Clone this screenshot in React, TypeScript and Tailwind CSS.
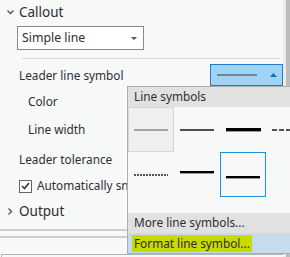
export default function App() {
  const font = { fontFamily: '"Noto Sans", "Segoe UI", sans-serif' }

  return (
    <div
      className="relative flex h-[257px] w-[290px] overflow-hidden bg-[#f7f8f8] text-[11.8px] text-[#2e2e36]"
      style={font}
    >
      {/* panel */}
      <div className="flex flex-1 flex-col">
        <div className="flex h-[24px] shrink-0 items-center pt-[1px]">
          <svg className="ml-[7px] mr-[5px]" width="7" height="5" viewBox="0 0 7 5">
            <path d="M0.5 0.5 L3.5 3.5 L6.5 0.5" fill="none" stroke="#555" strokeWidth="1.4" />
          </svg>
          <span className="text-[13.5px]">Callout</span>
        </div>
        <div className="ml-[17px] mt-[2px] flex h-[24px] w-[127px] shrink-0 items-center justify-between border border-[#8a8a8a] bg-white pl-[4px] pr-[6px]">
          <span className="text-[12.3px]">Simple line</span>
          <svg width="6" height="3" viewBox="0 0 6 3">
            <path d="M0 0 H6 L3 3 Z" fill="#555" />
          </svg>
        </div>
        <div className="ml-[22px] mr-[3px] mt-[8px] h-px shrink-0 bg-[#d9dada]" />

        <div className="mt-[5px] flex h-[22px] shrink-0 items-center justify-between pl-[19px]">
          <span className="pt-[2px]">Leader line symbol</span>
          <div className="flex h-[22px] w-[73px] items-center border border-[#1c7fcb] bg-[#a0d4f5] pl-[6px] pr-[5px]">
            <div className="h-[2px] w-[40px] bg-[#6a8799]" />
            <svg className="ml-auto" width="7" height="4" viewBox="0 0 7 4">
              <path d="M0 4 H7 L3.5 0 Z" fill="#1a6db0" />
            </svg>
          </div>
        </div>

        <div className="mt-[6px] flex h-[20px] shrink-0 items-center pl-[28px]">Color</div>
        <div className="mt-[8px] flex h-[20px] shrink-0 items-center pl-[28px]">Line width</div>
        <div className="mt-[10px] flex h-[20px] shrink-0 items-center pl-[19px]">Leader tolerance</div>
        <div className="mt-[6px] flex h-[20px] shrink-0 items-center pl-[19px]">
          <div className="flex h-[13px] w-[13px] items-center justify-center border border-[#666] bg-white">
            <svg width="9" height="8" viewBox="0 0 9 8">
              <path d="M1 4 L3.5 6.5 L8 1" fill="none" stroke="#333" strokeWidth="1.6" />
            </svg>
          </div>
          <span className="ml-[5px] whitespace-nowrap">Automatically snap</span>
        </div>
        <div className="mt-[4px] flex h-[22px] shrink-0 items-center">
          <svg className="ml-[8px] mr-[6px]" width="5" height="7" viewBox="0 0 5 7">
            <path d="M0.5 0.5 L3.5 3.5 L0.5 6.5" fill="none" stroke="#555" strokeWidth="1.4" />
          </svg>
          <span className="text-[13.5px]">Output</span>
        </div>
        <div className="mt-[7px] h-[2px] w-[127px] shrink-0 bg-[#cfcfcf]" />
        <div className="mt-[5px] h-[2px] w-[127px] shrink-0 bg-[#cfcfcf]" />
        <div className="ml-[1px] mt-[16px] flex-1 border-l border-t border-[#b5b5b5] bg-[#f7f8f8]" />
      </div>

      {/* scrollbar */}
      <div className="flex w-[7px]">
        <div className="w-[3px] bg-[#ebebeb]" />
        <div className="w-[4px] bg-[#bcbcbc]" />
      </div>

      {/* line symbol gallery popup */}
      <div className="absolute left-[127px] top-[86px] flex w-[175px] flex-col border border-[#adadad] bg-[#f7f8f8]">
        <div className="flex h-[20px] items-center bg-[#e1e1e1] pl-[6px]">Line symbols</div>
        <div className="grid grid-cols-[46px_46px_46px_46px]">
          <div className="flex h-[45px] items-center justify-center border border-[#d6d6d6] bg-[#efefef]">
            <div className="h-[2px] w-[34px] bg-[#a3a3a3]" />
          </div>
          <div className="flex h-[45px] items-center justify-center">
            <div className="h-[2px] w-[34px] bg-[#4e4e4e]" />
          </div>
          <div className="flex h-[45px] items-center justify-center">
            <div className="h-[3px] w-[35px] bg-black shadow-[0_1px_0_#9a9a9a]" />
          </div>
          <div className="flex h-[45px] items-center pl-[6px]">
            <div className="h-[2px] w-[34px] bg-[repeating-linear-gradient(90deg,#555_0,#555_5px,transparent_5px,transparent_7px)]" />
          </div>

          <div className="flex h-[45px] items-start justify-center pt-[22px]">
            <div className="h-[2px] w-[34px] bg-[repeating-linear-gradient(90deg,#555_0,#555_2px,transparent_2px,transparent_3px)]" />
          </div>
          <div className="flex h-[45px] items-start justify-center pt-[19px]">
            <div className="h-[2px] w-[34px] bg-black shadow-[0_1px_0_#9a9a9a]" />
          </div>
          <div className="flex h-[45px] items-start justify-center border border-[#1f8fd6] pt-[23px]">
            <div className="h-[2px] w-[34px] bg-black shadow-[0_1px_0_#9a9a9a]" />
          </div>
          <div className="h-[45px]" />
        </div>
        <div className="mt-[16px] flex h-[20px] items-center bg-[#e1e1e1] pl-[6px]">More line symbols...</div>
        <div className="flex h-[20px] items-center bg-[#c5dcef] pl-[4px]">
          <span className="bg-[#c8da00] px-[2px] leading-[17px]">Format line symbol...</span>
        </div>
      </div>
    </div>
  )
}
